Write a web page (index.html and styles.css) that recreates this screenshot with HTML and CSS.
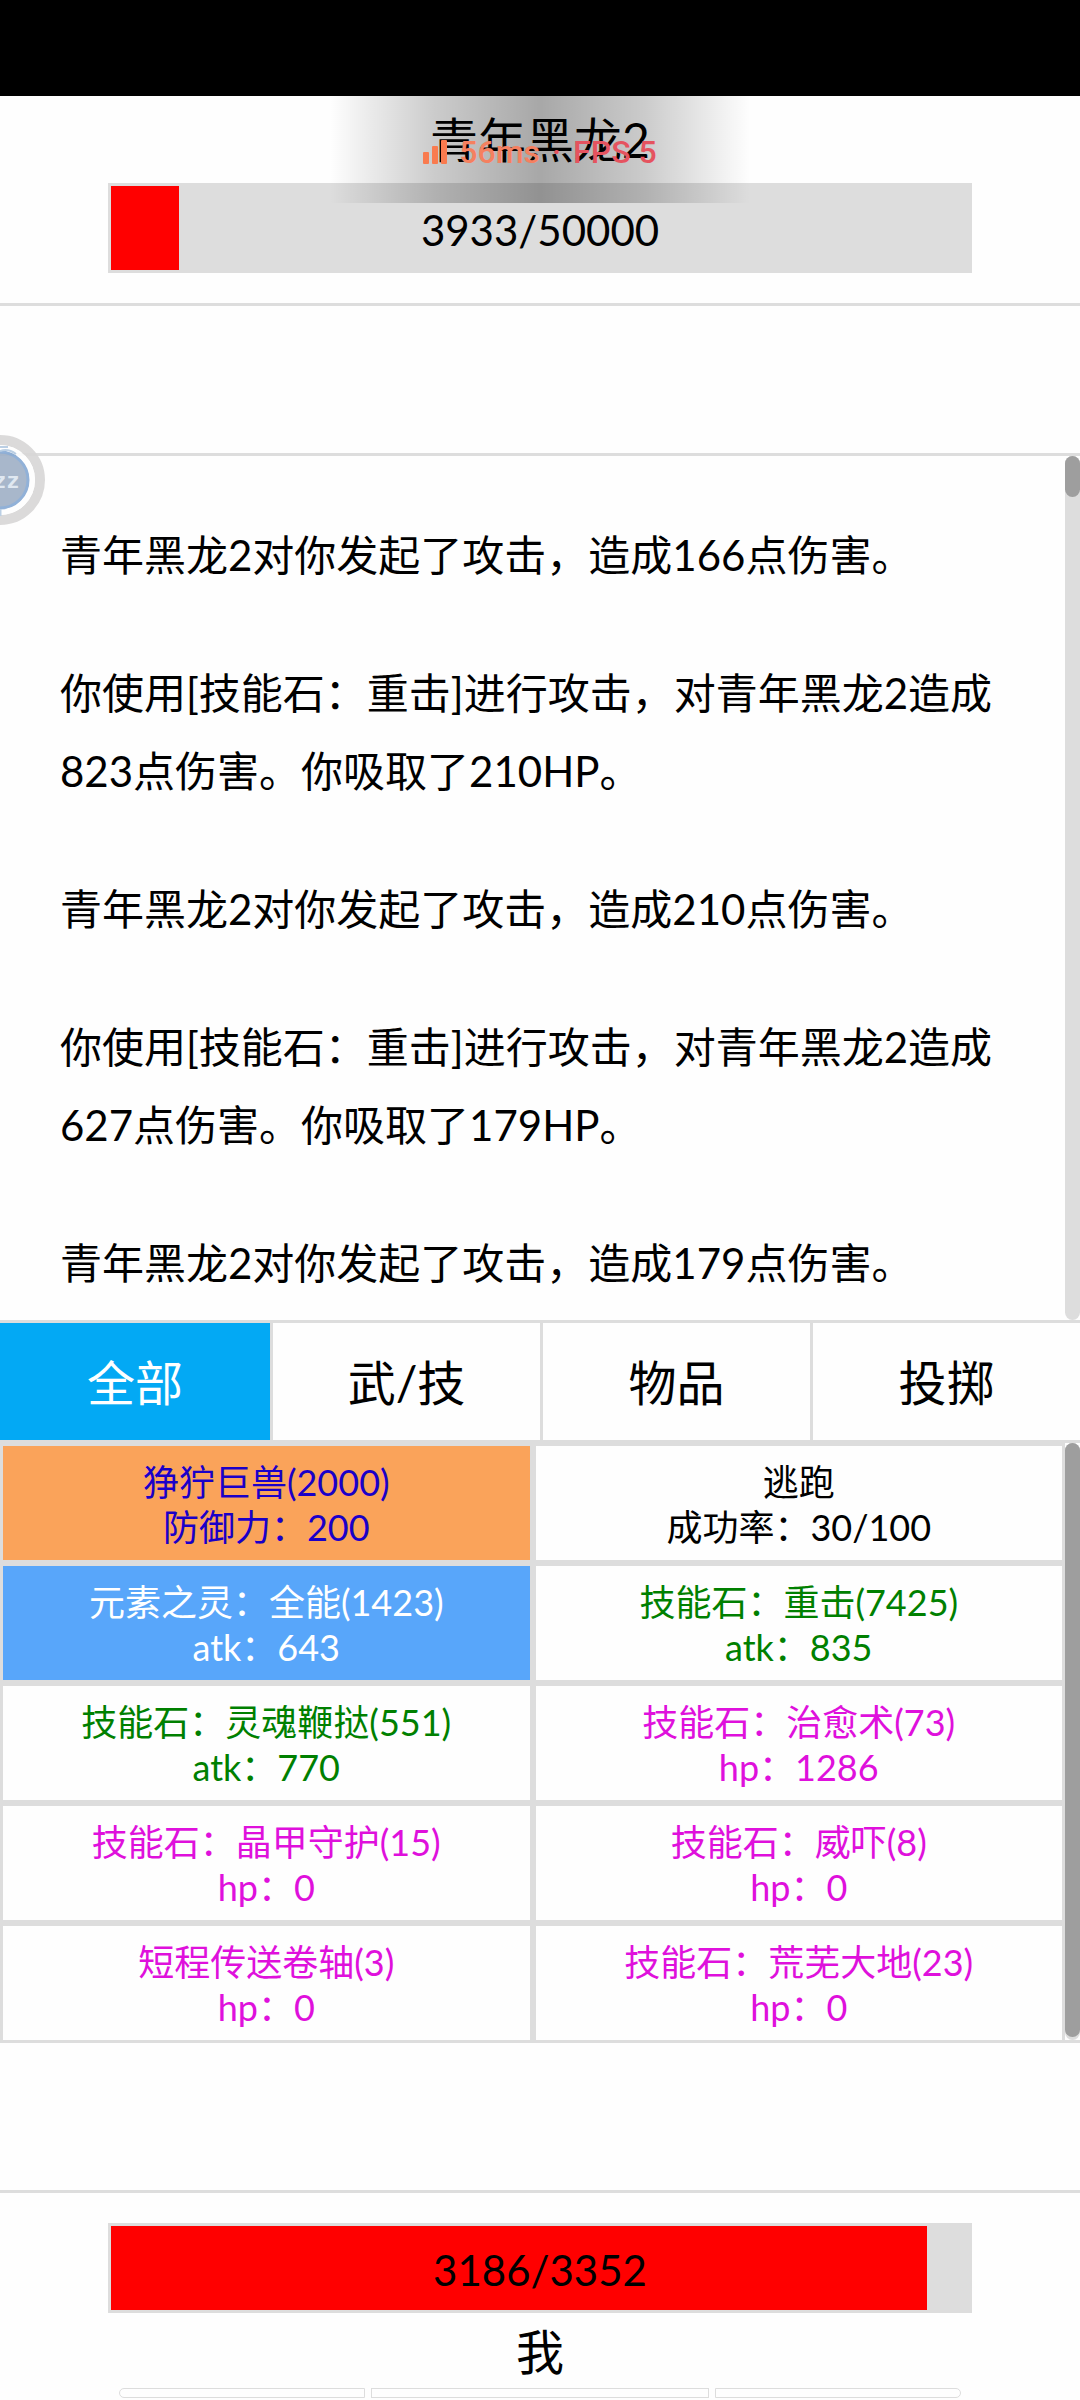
FILE: index.html
```
<!DOCTYPE html>
<html lang="zh-CN">
<head>
    <meta charset="UTF-8">
    <meta name="viewport" content="width=device-width, initial-scale=1">
    <title>战斗</title>
    <link rel="stylesheet" href="styles.css">
</head>
<body>
    <div class="statusbar"></div>

    <!-- Enemy -->
    <div class="enemy">
        <div class="name">青年黑龙2</div>
        <div class="hp-bar">
            <div class="hp-fill" style="width: 7.9%"></div>
            <span class="hp-text">3933/50000</span>
        </div>
    </div>
    <div class="buffs"></div>

    <!-- Battle log -->
    <div class="log">
        <div class="log-text">
            <p>青年黑龙2对你发起了攻击，造成166点伤害。</p>
            <p>你使用[技能石：重击]进行攻击，对青年黑龙2造成823点伤害。你吸取了210HP。</p>
            <p>青年黑龙2对你发起了攻击，造成210点伤害。</p>
            <p>你使用[技能石：重击]进行攻击，对青年黑龙2造成627点伤害。你吸取了179HP。</p>
            <p>青年黑龙2对你发起了攻击，造成179点伤害。</p>
        </div>
        <div class="scroll"><div class="thumb log-thumb"></div></div>
    </div>

    <div class="tabs">
        <button class="tab active">全部</button>
        <button class="tab">武/技</button>
        <button class="tab">物品</button>
        <button class="tab">投掷</button>
    </div>

    <!-- Actions -->
    <div class="actions">
        <div class="grid">
            <button class="card summon">狰狞巨兽(2000)<br>防御力：200</button>
            <button class="card">逃跑<br>成功率：30/100</button>
            <button class="card spirit">元素之灵：全能(1423)<br>atk：643</button>
            <button class="card attack">技能石：重击(7425)<br>atk：835</button>
            <button class="card attack">技能石：灵魂鞭挞(551)<br>atk：770</button>
            <button class="card heal">技能石：治愈术(73)<br>hp：1286</button>
            <button class="card heal">技能石：晶甲守护(15)<br>hp：0</button>
            <button class="card heal">技能石：威吓(8)<br>hp：0</button>
            <button class="card heal">短程传送卷轴(3)<br>hp：0</button>
            <button class="card heal">技能石：荒芜大地(23)<br>hp：0</button>
        </div>
        <div class="scroll"><div class="thumb actions-thumb"></div></div>
    </div>
    <div class="buffs"></div>

    <!-- Player -->
    <div class="player">
        <div class="hp-bar">
            <div class="hp-fill" style="width: 95.048%"></div>
            <span class="hp-text">3186/3352</span>
        </div>
        <div class="name">我</div>
        <div class="slots">
            <div class="slot first"></div>
            <div class="slot middle"></div>
            <div class="slot last"></div>
        </div>
    </div>

    <!-- Performance overlay -->
    <div class="perf">
        <svg class="signal" width="24" height="24" viewBox="0 0 24 24">
            <rect x="0" y="12" width="6" height="12" rx="1"/>
            <rect x="9" y="6" width="6" height="18" rx="1"/>
            <rect x="18" y="0" width="6" height="24" rx="1"/>
        </svg>
        <span class="ping">56ms</span>
        <span class="fps">·</span>
        <span class="fps">FPS 5</span>
    </div>

    <!-- Floating ball docked at the left edge -->
    <svg class="ball" width="46" height="92" viewBox="0 0 46 92">
        <circle cx="0" cy="46" r="40" fill="none" stroke="#d8d7d7" stroke-width="10"/>
        <circle cx="0" cy="46" r="35" fill="#fff"/>
        <circle cx="0" cy="46" r="29" fill="#9fb0c6"/>
        <path d="M0 18A28 28 0 0 1 0 74" fill="none" stroke="#86a9d4" stroke-width="3"/>
        <path d="M0 13H8M0 17Q8 14 16 20" fill="none" stroke="#b4cbe2" stroke-width="2"/>
        <path d="M0 75V82" stroke="#b4cbe2" stroke-width="3"/>
        <text x="-7" y="54">zz</text>
    </svg>
</body>
</html>
```

FILE: styles.css
```
* {
    box-sizing: border-box;
}

body {
    margin: 0;
    height: 100vh;
    display: flex;
    flex-direction: column;
    position: relative;
    overflow: hidden;
    background: #fefefe;
    color: #000;
    font-family: Lato, "Noto Sans CJK SC", sans-serif;
    font-size: 42px;
}

button {
    font-family: inherit;
    margin: 0;
    padding: 0;
    cursor: pointer;
}

.statusbar {
    flex: none;
    height: 96px;
    background: #000;
}

/* Enemy and player */
.enemy {
    padding-bottom: 30px;
    border-bottom: 3px solid #ddd;
}

.player {
    padding-top: 30px;
}

.name {
    font-size: 48px;
    line-height: 87px;
    text-align: center;
}

.player .name {
    height: 75px;
    line-height: 78px;
}

.hp-bar {
    position: relative;
    width: 80%;
    height: 90px;
    margin: 0 auto;
    border: 3px solid #ddd;
    background: #ddd;
}

.hp-fill {
    height: 100%;
    background: #f00;
}

.hp-text {
    position: absolute;
    inset: 0;
    line-height: 88px;
    text-align: center;
}

.buffs {
    flex: none;
    height: 150px;
    border-bottom: 3px solid #ddd;
}

/* Battle log */
.log {
    flex: 1;
    min-height: 0;
    display: flex;
}

.log-text {
    flex: 1;
    padding: 0 60px;
    overflow: hidden;
}

.log-text p {
    margin: 60px 0;
    line-height: 78px;
}

.scroll {
    flex: none;
    width: 15px;
    border-radius: 8px;
    background: #ddd;
}

.thumb {
    border-radius: 8px;
    background: #9e9e9e;
}

.log-thumb {
    height: 41px;
}

.actions-thumb {
    height: 594px;
}

/* Tabs */
.tabs {
    display: flex;
    border-top: 3px solid #ddd;
    border-bottom: 3px solid #ddd;
}

.tab {
    width: 25%;
    height: 117px;
    padding-bottom: 4px;
    border: none;
    border-left: 3px solid #ddd;
    background: #fefefe;
    color: #000;
    font-size: 48px;
}

.tab.active {
    border-left: none;
    background: #03a9f4;
    color: #fff;
}

/* Action cards */
.actions {
    display: flex;
    border-bottom: 3px solid #ddd;
}

.grid {
    flex: 1;
    display: grid;
    grid-template-columns: 1fr 1fr;
    margin-bottom: -3px;
}

.card {
    height: 120px;
    padding-top: 4px;
    border: 3px solid #ddd;
    background: #fefefe;
    color: #000;
    font-size: 36px;
    line-height: 45px;
}

.summon {
    background: #faa35a;
    color: #1a00c8;
}

.spirit {
    background: #58a6fa;
    color: #fff;
}

.attack {
    color: #008000;
}

.heal {
    color: #df10dc;
}

/* Bottom slots */
.slots {
    display: flex;
    gap: 6px;
    width: 78%;
    height: 12px;
    margin: 0 auto;
}

.slot {
    flex: 1;
    height: 10px;
    border: 1px solid #ddd;
}

.slot.first {
    border-radius: 5px 0 0 5px;
}

.slot.middle {
    flex: 1.38;
}

.slot.last {
    border-radius: 0 5px 5px 0;
}

/* Performance overlay */
.perf {
    position: absolute;
    top: 96px;
    left: 50%;
    width: 420px;
    height: 107px;
    padding-top: 4px;
    transform: translateX(-50%);
    display: flex;
    align-items: center;
    justify-content: center;
    gap: 12px;
    font-family: Roboto, sans-serif;
    font-size: 32px;
    font-weight: 500;
    background: linear-gradient(to right, rgba(0, 0, 0, 0), rgba(0, 0, 0, 0.2) 25%, rgba(0, 0, 0, 0.34) 50%, rgba(0, 0, 0, 0.2) 75%, rgba(0, 0, 0, 0));
}

.signal {
    fill: #f97b4f;
}

.ping {
    color: #f58060;
}

.fps {
    color: #e5535f;
}

/* Floating ball */
.ball {
    position: absolute;
    top: 434px;
    left: 0;
    opacity: 0.9;
}

.ball text {
    fill: #dde6f0;
    font: bold 22px "DejaVu Sans Mono", monospace;
}
```
